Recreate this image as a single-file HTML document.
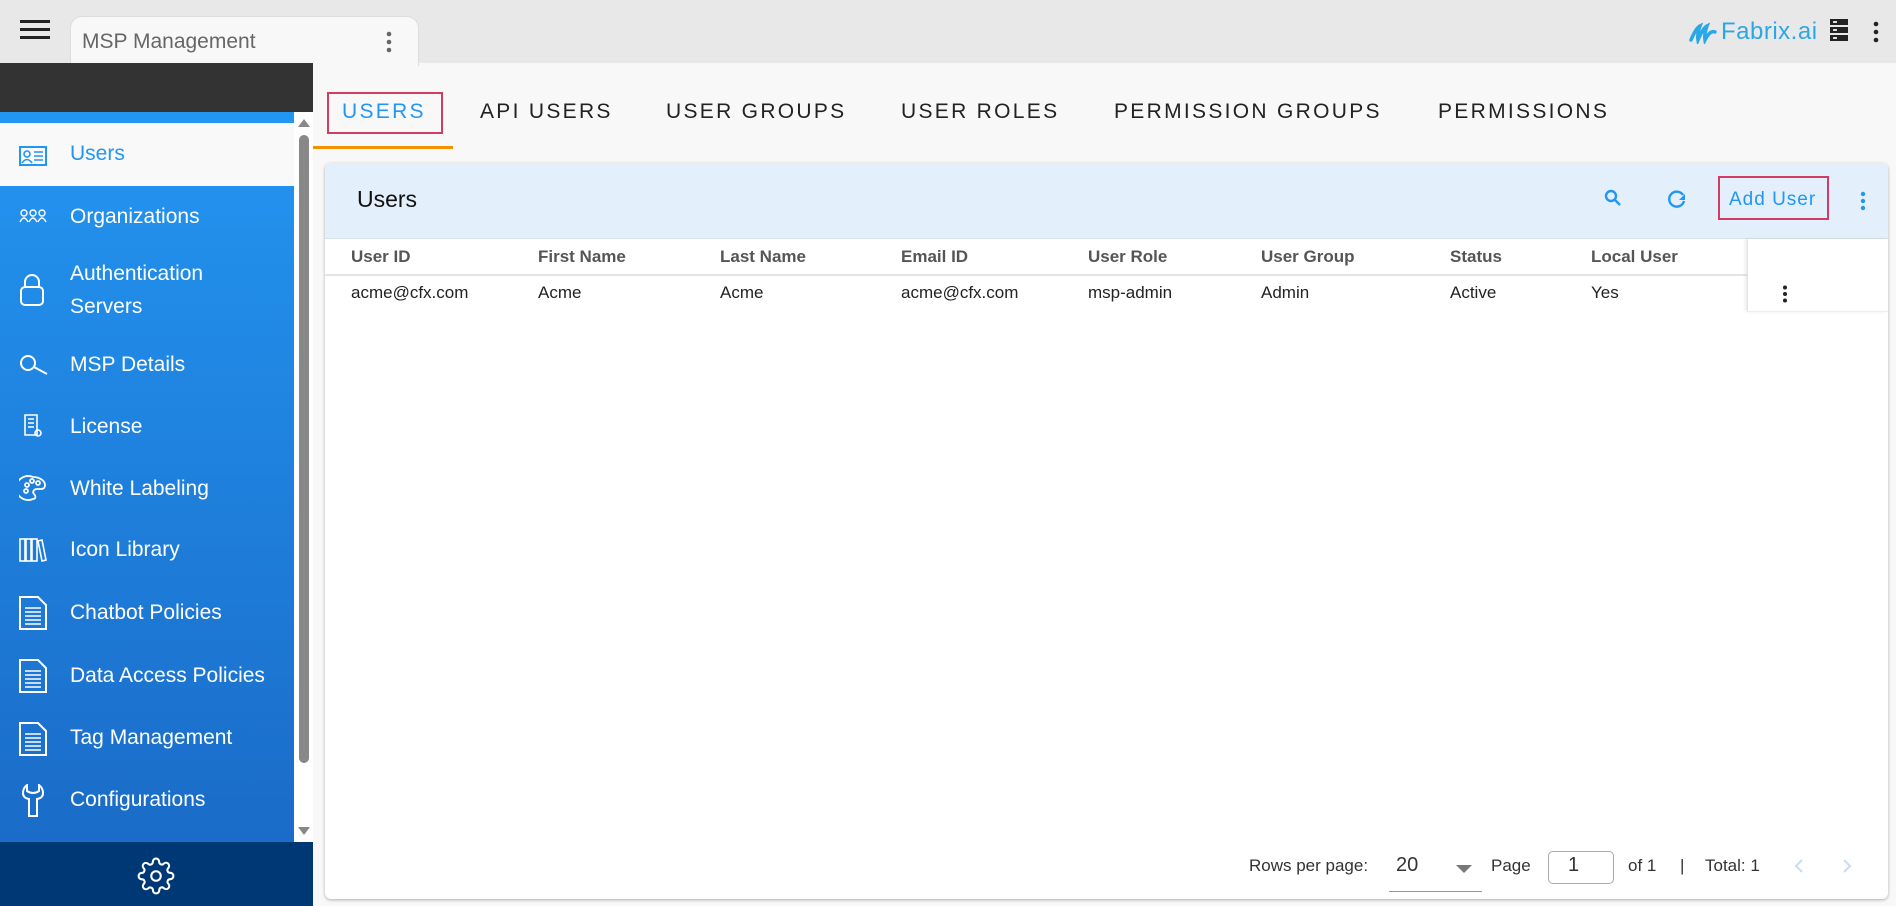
<!DOCTYPE html>
<html><head><meta charset="utf-8"><style>
*{box-sizing:border-box;margin:0;padding:0}
body{width:1896px;height:906px;overflow:hidden;background:#f8f8f8;font-family:"Liberation Sans",Arial,sans-serif;position:relative}
.a{position:absolute}
.top{left:0;top:0;width:1896px;height:63px;background:#e8e8e8}
.side{left:0;top:63px;width:313px;height:843px;background:#fff}
.mi{position:absolute;left:70px;font-size:21px;color:#fff;line-height:26px}
.ic{position:absolute;left:19px}
.tab{position:absolute;top:100px;font-size:21px;letter-spacing:2.3px;color:#222}
.th{position:absolute;top:247px;font-size:17px;font-weight:bold;color:#555}
.td{position:absolute;top:283px;font-size:17px;color:#222}
.pg{position:absolute;top:856px;font-size:17px;color:#333}
</style></head><body>
<div class="a top"></div>
<svg class="a" style="left:20px;top:18px" width="32" height="24"><rect x="0" y="2" width="30" height="3" fill="#222"/><rect x="0" y="10" width="30" height="3" fill="#222"/><rect x="0" y="18" width="30" height="3" fill="#222"/></svg>
<div class="a" style="left:70px;top:16px;width:349px;height:50px;background:#f8f8f8;border-radius:12px 12px 0 0;border:1px solid #ddd;border-bottom:none"></div>
<div class="a" style="left:82px;top:30px;font-size:21px;color:#666">MSP Management</div>
<svg class="a" style="left:386px;top:31px" width="6" height="22"><circle cx="3" cy="3" r="2.3" fill="#666"/><circle cx="3" cy="11" r="2.3" fill="#666"/><circle cx="3" cy="19" r="2.3" fill="#666"/></svg>
<svg class="a" style="left:1688px;top:22px" width="30" height="22"><path d="M3 18 Q8 6 12 4 Q9 12 10 18 Q15 6 19 4 Q16 12 17 18 Q22 8 27 10" stroke="#2aa7e6" stroke-width="3.5" fill="none" stroke-linecap="round"/></svg>
<div class="a" style="left:1721px;top:18px;font-size:24px;color:#2aa7e6;letter-spacing:0.5px">Fabrix.ai</div>
<svg class="a" style="left:1830px;top:19px" width="18" height="22"><rect x="0" y="0" width="18" height="6" fill="#222"/><rect x="0" y="8" width="18" height="6" fill="#222"/><rect x="0" y="16" width="18" height="6" fill="#222"/><rect x="3" y="2" width="4" height="2" fill="#ddd"/><rect x="3" y="10" width="4" height="2" fill="#ddd"/><rect x="3" y="18" width="4" height="2" fill="#ddd"/></svg>
<svg class="a" style="left:1873px;top:21px" width="6" height="22"><circle cx="3" cy="3" r="2.3" fill="#222"/><circle cx="3" cy="11" r="2.3" fill="#222"/><circle cx="3" cy="19" r="2.3" fill="#222"/></svg>

<div class="a side"></div>
<div class="a" style="left:0;top:63px;width:313px;height:49px;background:#333"></div>
<div class="a" style="left:0;top:112px;width:294px;height:11px;background:#2196f3"></div>
<div class="a" style="left:0;top:123px;width:294px;height:63px;background:#f9f9f9"></div>
<div class="a" style="left:0;top:186px;width:294px;height:656px;background:linear-gradient(#2291ed,#1a6cc8)"></div>
<div class="a" style="left:0;top:842px;width:313px;height:64px;background:#003876"></div>
<svg class="a" style="left:297px;top:117px" width="14" height="720"><path d="M7 2 L13 10 L1 10Z" fill="#888"/><rect x="2" y="18" width="10" height="628" rx="5" fill="#888"/><path d="M1 710 L13 710 L7 718Z" fill="#888"/></svg>
<svg class="ic" style="top:146px" width="28" height="20"><rect x="1" y="1" width="26" height="18" fill="none" stroke="#2196f3" stroke-width="2"/><circle cx="8" cy="8" r="3" fill="none" stroke="#2196f3" stroke-width="1.6"/><path d="M3 17 Q8 10 13 17" fill="none" stroke="#2196f3" stroke-width="1.6"/><path d="M15 6h9M15 10h9M15 14h9" stroke="#2196f3" stroke-width="1.6"/></svg>
<div class="mi" style="top:141px;color:#2196f3">Users</div>
<svg class="ic" style="top:208px" width="28" height="16" fill="none" stroke="#fff" stroke-width="1.4"><circle cx="5" cy="5" r="3"/><circle cx="14" cy="5" r="3"/><circle cx="23" cy="5" r="3"/><path d="M1 14 Q5 6 9 14M10 14 Q14 6 18 14M19 14 Q23 6 27 14"/></svg>
<div class="mi" style="top:204px">Organizations</div>
<svg class="ic" style="top:273px" width="26" height="34" fill="none" stroke="#fff" stroke-width="2"><path d="M6 14 V9 a7 7 0 0 1 14 0 V14"/><rect x="2" y="14" width="22" height="18" rx="4"/></svg>
<div class="mi" style="top:261px">Authentication<br><span style="position:relative;top:7px">Servers</span></div>
<svg class="ic" style="top:353px" width="30" height="22" fill="none" stroke="#fff" stroke-width="2"><circle cx="9" cy="10" r="7"/><path d="M15 14 L28 21"/></svg>
<div class="mi" style="top:352px">MSP Details</div>
<svg class="ic" style="left:23px;top:413px" width="20" height="26" fill="none" stroke="#fff" stroke-width="1.6"><path d="M2 2h12v20H2z M5 6h6M5 10h6M5 14h6"/><circle cx="15" cy="20" r="3"/></svg>
<div class="mi" style="top:414px">License</div>
<svg class="ic" style="top:475px" width="28" height="26" fill="none" stroke="#fff" stroke-width="1.8"><path d="M14 2 A12 12 0 1 0 14 24 c3 0 3-3 1-5 c-2-2 0-5 3-5 h4 c3 0 4-2 4-4 C26 6 21 2 14 2z"/><circle cx="8" cy="10" r="2"/><circle cx="13" cy="6" r="2"/><circle cx="19" cy="8" r="2"/><circle cx="7" cy="16" r="2"/></svg>
<div class="mi" style="top:476px">White Labeling</div>
<svg class="ic" style="top:537px" width="28" height="26" fill="none" stroke="#fff" stroke-width="1.6"><rect x="1" y="2" width="5" height="22"/><rect x="7" y="2" width="5" height="22"/><rect x="13" y="2" width="5" height="22"/><path d="M19 4 L23 3 L27 23 L23 24Z"/></svg>
<div class="mi" style="top:537px">Icon Library</div>
<svg class="ic" style="top:596px" width="28" height="34" fill="none" stroke="#fff" stroke-width="2"><path d="M1 1h18l8 8v24H1z"/><path d="M6 12h16M6 16h16M6 20h16M6 24h16M6 28h16" stroke-width="1.6"/></svg>
<div class="mi" style="top:600px">Chatbot Policies</div>
<svg class="ic" style="top:659px" width="28" height="34" fill="none" stroke="#fff" stroke-width="2"><path d="M1 1h18l8 8v24H1z"/><path d="M6 12h16M6 16h16M6 20h16M6 24h16M6 28h16" stroke-width="1.6"/></svg>
<div class="mi" style="top:663px">Data Access Policies</div>
<svg class="ic" style="top:722px" width="28" height="34" fill="none" stroke="#fff" stroke-width="2"><path d="M1 1h18l8 8v24H1z"/><path d="M6 12h16M6 16h16M6 20h16M6 24h16M6 28h16" stroke-width="1.6"/></svg>
<div class="mi" style="top:725px">Tag Management</div>
<svg class="ic" style="left:22px;top:784px" width="22" height="34" fill="none" stroke="#fff" stroke-width="2"><path d="M5 1 V7 Q11 11 17 7 V1 Q21 4 21 9 Q21 14 15 15 V32 H7 V15 Q1 14 1 9 Q1 4 5 1z"/></svg>
<div class="mi" style="top:787px">Configurations</div>
<svg class="a" style="left:137px;top:857px" width="38" height="38" viewBox="0 0 24 24" fill="none" stroke="#fff" stroke-width="1.3"><circle cx="12" cy="12" r="3"/><path d="M19.4 15a1.65 1.65 0 0 0 .33 1.820l.06.06a2 2 0 1 1-2.83 2.83l-.06-.06a1.65 1.65 0 0 0-1.82-.33 1.65 1.65 0 0 0-1 1.51V21a2 2 0 1 1-4 0v-.09A1.65 1.65 0 0 0 9 19.4a1.65 1.65 0 0 0-1.82.33l-.06.06a2 2 0 1 1-2.83-2.83l.06-.06a1.65 1.65 0 0 0 .33-1.82 1.65 1.65 0 0 0-1.51-1H3a2 2 0 1 1 0-4h.09A1.650 1.65 0 0 0 4.6 9a1.65 1.65 0 0 0-.33-1.82l-.06-.06a2 2 0 1 1 2.83-2.83l.06.06a1.65 1.65 0 0 0 1.82.33H9a1.65 1.65 0 0 0 1-1.51V3a2 2 0 1 1 4 0v.09a1.65 1.65 0 0 0 1 1.51 1.65 1.65 0 0 0 1.82-.33l.06-.06a2 2 0 1 1 2.83 2.83l-.06.06a1.65 1.65 0 0 0-.33 1.82V9a1.65 1.65 0 0 0 1.51 1H21a2 2 0 1 1 0 4h-.09a1.65 1.65 0 0 0-1.51 1z"/></svg>

<div class="a" style="left:327px;top:92px;width:116px;height:42px;border:2px solid #d03c64"></div>
<div class="tab" style="left:342px;color:#2196f3">USERS</div>
<div class="a" style="left:313px;top:146px;width:140px;height:3px;background:#f39200"></div>
<div class="tab" style="left:480px">API USERS</div>
<div class="tab" style="left:666px">USER GROUPS</div>
<div class="tab" style="left:901px">USER ROLES</div>
<div class="tab" style="left:1114px">PERMISSION GROUPS</div>
<div class="tab" style="left:1438px">PERMISSIONS</div>

<div class="a" style="left:325px;top:163px;width:1563px;height:736px;background:#fff;border-radius:6px;box-shadow:0 1px 3px rgba(0,0,0,.3)"></div>
<div class="a" style="left:325px;top:163px;width:1563px;height:76px;background:#e3f0fb;border-radius:6px 6px 0 0;border-bottom:1px solid #d8e2ea"></div>
<div class="a" style="left:357px;top:186px;font-size:23px;color:#111">Users</div>
<svg class="a" style="left:1604px;top:189px" width="18" height="18" fill="none" stroke="#2196f3" stroke-width="2.4"><circle cx="7" cy="7" r="5"/><path d="M11 11 L16 16"/></svg>
<svg class="a" style="left:1666px;top:188px" width="22" height="22" fill="none" stroke="#2196f3" stroke-width="2.4"><path d="M17 7 A7.5 7.5 0 1 0 18 13"/><path d="M13 12 L19 12 L19 6Z" fill="#2196f3" stroke="none"/></svg>
<div class="a" style="left:1718px;top:176px;width:111px;height:44px;border:2px solid #d03c64"></div>
<div class="a" style="left:1729px;top:189px;font-size:19px;color:#2196f3;letter-spacing:1px">Add User</div>
<svg class="a" style="left:1860px;top:191px" width="6" height="20"><circle cx="3" cy="3" r="2.2" fill="#2196f3"/><circle cx="3" cy="10" r="2.2" fill="#2196f3"/><circle cx="3" cy="17" r="2.2" fill="#2196f3"/></svg>

<div class="a" style="left:325px;top:274px;width:1422px;height:2px;background:#e4e4e4"></div>
<div class="a" style="left:1747px;top:239px;width:141px;height:73px;border-left:1px solid #e4e4e4;box-shadow:-2px 0 3px rgba(0,0,0,.08);border-bottom:1px solid #eee"></div>
<div class="th" style="left:351px">User ID</div>
<div class="th" style="left:538px">First Name</div>
<div class="th" style="left:720px">Last Name</div>
<div class="th" style="left:901px">Email ID</div>
<div class="th" style="left:1088px">User Role</div>
<div class="th" style="left:1261px">User Group</div>
<div class="th" style="left:1450px">Status</div>
<div class="th" style="left:1591px">Local User</div>
<div class="td" style="left:351px">acme@cfx.com</div>
<div class="td" style="left:538px">Acme</div>
<div class="td" style="left:720px">Acme</div>
<div class="td" style="left:901px">acme@cfx.com</div>
<div class="td" style="left:1088px">msp-admin</div>
<div class="td" style="left:1261px">Admin</div>
<div class="td" style="left:1450px">Active</div>
<div class="td" style="left:1591px">Yes</div>
<svg class="a" style="left:1782px;top:285px" width="6" height="18"><circle cx="3" cy="2.5" r="2" fill="#222"/><circle cx="3" cy="9" r="2" fill="#222"/><circle cx="3" cy="15.5" r="2" fill="#222"/></svg>

<div class="pg" style="left:1249px">Rows per page:</div>
<div class="pg" style="left:1396px;font-size:20px;top:854px">20</div>
<svg class="a" style="left:1456px;top:865px" width="16" height="8"><path d="M0 0 L16 0 L8 8Z" fill="#777"/></svg>
<div class="a" style="left:1389px;top:891px;width:93px;height:1px;background:#999"></div>
<div class="pg" style="left:1491px">Page</div>
<div class="a" style="left:1548px;top:851px;width:66px;height:33px;border:1px solid #aaa;border-radius:5px;background:#fff"></div>
<div class="pg" style="left:1568px;font-size:20px;top:854px">1</div>
<div class="pg" style="left:1628px">of 1</div>
<div class="pg" style="left:1680px">|</div>
<div class="pg" style="left:1705px">Total: 1</div>
<svg class="a" style="left:1794px;top:858px" width="10" height="16" fill="none" stroke="#c5def5" stroke-width="2"><path d="M8 2 L2 8 L8 14"/></svg>
<svg class="a" style="left:1842px;top:858px" width="10" height="16" fill="none" stroke="#c5def5" stroke-width="2"><path d="M2 2 L8 8 L2 14"/></svg>
</body></html>
